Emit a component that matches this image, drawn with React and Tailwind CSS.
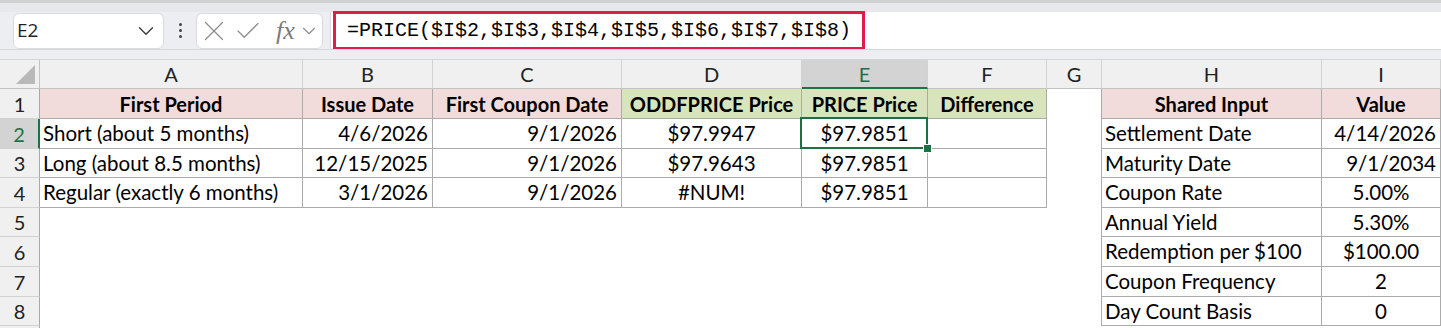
import { ChevronDown, X, Check } from "lucide-react"

const cellFont = { fontFamily: "Lato, 'Open Sans', sans-serif" }

const rows = [
  {
    left: ["First Period", "Issue Date", "First Coupon Date", "ODDFPRICE Price", "PRICE Price", "Difference"],
    right: ["Shared Input", "Value"],
    header: true,
  },
  {
    left: ["Short (about 5 months)", "4/6/2026", "9/1/2026", "$97.9947", "$97.9851", ""],
    right: ["Settlement Date", "4/14/2026"],
    iAlign: "end",
  },
  {
    left: ["Long (about 8.5 months)", "12/15/2025", "9/1/2026", "$97.9643", "$97.9851", ""],
    right: ["Maturity Date", "9/1/2034"],
    iAlign: "end",
  },
  {
    left: ["Regular (exactly 6 months)", "3/1/2026", "9/1/2026", "#NUM!", "$97.9851", ""],
    right: ["Coupon Rate", "5.00%"],
    iAlign: "center",
  },
  { left: null, right: ["Annual Yield", "5.30%"], iAlign: "center" },
  { left: null, right: ["Redemption per $100", "$100.00"], iAlign: "center" },
  { left: null, right: ["Coupon Frequency", "2"], iAlign: "center" },
  { left: null, right: ["Day Count Basis", "0"], iAlign: "center" },
]

const leftAlign = ["start", "end", "end", "center", "center", "center"]
const leftBg = ["pink", "pink", "pink", "green", "green", "green"]

function alignClass(a) {
  if (a === "start") return "justify-start pl-[3px]"
  if (a === "end") return "justify-end pr-[4px]"
  return "justify-center"
}

function bgClass(b) {
  if (b === "pink") return "bg-[#f2dcdb]"
  if (b === "green") return "bg-[#d8e4bc]"
  return "bg-white"
}

function DataCell({ text, align, bg, bold, bordered, selected }) {
  return (
    <div
      className={`relative flex items-center overflow-visible whitespace-nowrap text-black ${alignClass(align)} ${bgClass(bg)} ${bold ? "font-bold text-[20px]" : "text-[20.5px]"} ${bordered ? "border-r border-b border-[#ababab]" : ""} ${selected ? "z-10" : ""}`}
    >
      {text}
      {selected && (
        <>
          <div className="absolute -left-[2px] -top-[2px] -right-[1px] -bottom-[1px] border-2 border-[#1e7145]" />
          <div className="absolute -right-[5px] -bottom-[5px] h-[9px] w-[9px] bg-[#1e7145] border border-white" />
        </>
      )}
    </div>
  )
}

function ColHead({ label, active }) {
  return (
    <div
      className={`flex items-center justify-center text-[20px] border-r border-[#d2d2d2] ${active ? "bg-[#d3d3d3] text-[#1e7145] border-b-2 border-b-[#1e7145]" : "bg-[#f0f0f0] text-[#222] border-b border-b-[#c3c3c3]"}`}
    >
      {label}
    </div>
  )
}

function RowHead({ n, active }) {
  return (
    <div
      className={`flex items-center justify-center text-[20px] border-b border-[#d2d2d2] ${active ? "bg-[#d3d3d3] text-[#1e7145] border-r-2 border-r-[#1e7145]" : "bg-[#f0f0f0] text-[#222] border-r border-r-[#a9a9a9]"}`}
    >
      {n}
    </div>
  )
}

function FormulaBar() {
  return (
    <div className="h-[60px] flex flex-col bg-[#eceef1] border-b border-[#d6d6d6]">
      <div className="h-[3px] bg-[#cfd0d2]" />
      <div className="h-[9px] bg-[#e6e8eb]" />
      <div className="flex h-[37px]" style={{ fontFamily: "'Open Sans', sans-serif" }}>
        <div className="flex items-center pl-[13px] pr-[7px]">
          <div className="w-[151px] h-[36px] bg-white border border-[#d8dbdf] rounded-[6px] flex items-center justify-between pl-[3px] pr-[4px]">
            <span className="text-[19px] text-[#1f1f1f]">E2</span>
            <ChevronDown size={26} strokeWidth={1.3} className="text-[#3c3c3c]" />
          </div>
          <div className="w-[32px] flex flex-col items-center gap-[3px]">
            <span className="w-[3px] h-[3px] rounded-full bg-[#444]" />
            <span className="w-[3px] h-[3px] rounded-full bg-[#444]" />
            <span className="w-[3px] h-[3px] rounded-full bg-[#444]" />
          </div>
          <div className="w-[127px] h-[36px] bg-white border border-[#d8dbdf] rounded-[6px] flex items-center">
            <X size={34} strokeWidth={0.85} className="flex-none text-[#8c8c8c]" />
            <Check size={30} strokeWidth={1} className="flex-none text-[#8c8c8c] ml-[2px]" />
            <span
              className="flex-none ml-[13px] text-[26px] italic text-[#7b7b7b] leading-none"
              style={{ fontFamily: "'Liberation Serif', serif" }}
            >
              fx
            </span>
            <ChevronDown size={22} strokeWidth={1.2} className="flex-none text-[#8c8c8c] ml-[3px]" />
          </div>
        </div>
        <div className="flex-1 bg-white border-l border-[#d6d8db] flex items-center pl-[2px]">
          <div
            className="h-[39px] w-[532px] border-[3px] border-[#e11c48] flex items-center pl-[11px] text-[20px] text-black"
            style={{ fontFamily: "'Liberation Mono', monospace" }}
          >
            =PRICE($I$2,$I$3,$I$4,$I$5,$I$6,$I$7,$I$8)
          </div>
        </div>
      </div>
      <div className="flex-1 border-t border-[#d6d8db]" />
    </div>
  )
}

export default function App() {
  const letters = ["A", "B", "C", "D", "E", "F", "G", "H", "I"]

  return (
    <div className="w-[1441px] h-[328px] overflow-hidden bg-white">
      <FormulaBar />
      <div
        className="grid grid-cols-[40px_263px_130px_189px_180px_126px_119px_55px_220px_119px] grid-rows-[29px_30px_30px_29px_30px_29px_30px_30px_29px_10px]"
        style={cellFont}
      >
        {/* corner */}
        <div className="relative bg-[#f0f0f0] border-r border-b border-[#c3c3c3] flex items-end justify-end pr-[4px] pb-[4px]">
          <div className="w-0 h-0 border-l-[19px] border-l-transparent border-b-[19px] border-b-[#b9b9b9]" />
        </div>
        {letters.map((l) => (
          <ColHead key={l} label={l} active={l === "E"} />
        ))}

        {rows.map((r, i) => (
          <RowCells key={i} r={r} i={i} />
        ))}

        <div className="bg-[#f0f0f0] border-r border-[#a9a9a9]" />
        <div className="col-span-9 bg-white" />
      </div>
    </div>
  )
}

function RowCells({ r, i }) {
  const n = i + 1
  return (
    <>
      <RowHead n={n} active={n === 2} />
      {r.left
        ? r.left.map((t, j) => (
            <DataCell
              key={j}
              text={t}
              align={r.header ? "center" : leftAlign[j]}
              bg={r.header ? leftBg[j] : "white"}
              bold={r.header}
              bordered
              selected={n === 2 && j === 4}
            />
          ))
        : [0, 1, 2, 3, 4, 5].map((j) => <div key={j} className="bg-white" />)}
      <div className="bg-white border-r border-[#ababab]" />
      <DataCell text={r.right[0]} align={r.header ? "center" : "start"} bg={r.header ? "pink" : "white"} bold={r.header} bordered />
      <DataCell text={r.right[1]} align={r.header ? "center" : r.iAlign} bg={r.header ? "pink" : "white"} bold={r.header} bordered />
    </>
  )
}
